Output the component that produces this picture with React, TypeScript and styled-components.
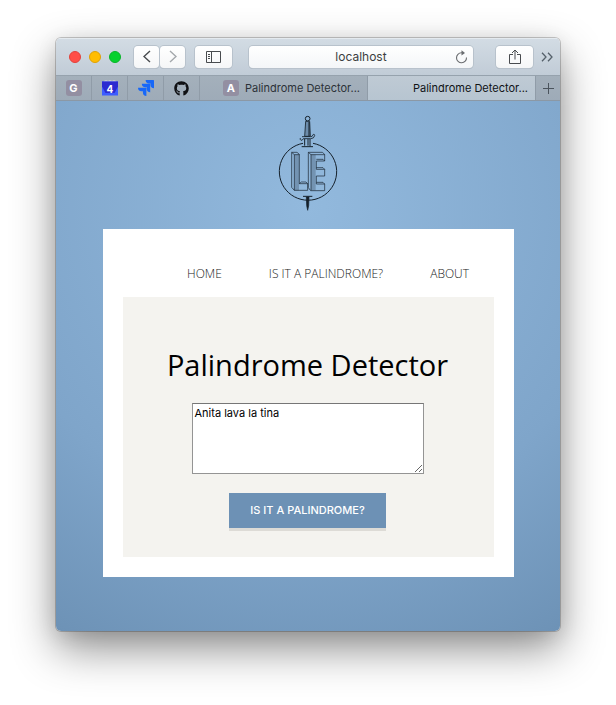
import React, { useState } from 'react';
import styled, { createGlobalStyle } from 'styled-components';
import { SiJira } from 'react-icons/si';
import { FaGithub } from 'react-icons/fa';

const uiFont = '"Inter", "Liberation Sans", sans-serif';
const pageFont = '"Open Sans", "Noto Sans", sans-serif';

const GlobalStyle = createGlobalStyle`
  *, *::before, *::after { box-sizing: border-box; }
  html, body, #root { height: 100%; }
  body { margin: 0; background: #fff; font-family: ${uiFont}; }
  button { font: inherit; border: 0; margin: 0; padding: 0; cursor: pointer; }
`;

const Desktop = styled.div`
  display: flex;
  min-height: 100%;
  padding: 38px 56px 74px;
`;

const Window = styled.div`
  flex: 1;
  min-width: 0;
  display: flex;
  flex-direction: column;
  border-radius: 5px;
  overflow: hidden;
  box-shadow: 0 0 0 1px rgba(0, 0, 0, 0.2), 0 18px 44px rgba(0, 0, 0, 0.44), 0 4px 20px rgba(0, 0, 0, 0.1);
`;

const Toolbar = styled.header`
  display: flex;
  align-items: center;
  height: 37px;
  padding: 0 6px 0 13px;
  background: linear-gradient(#d3dce4, #c1ccd7);
  box-shadow: inset 0 1px #e4eaef;
`;

const Lights = styled.div`
  display: flex;
  gap: 8px;
  margin-right: 13px;
`;

const Light = styled.button<{ $fill: string; $edge: string }>`
  width: 12px;
  height: 12px;
  border-radius: 50%;
  background: ${p => p.$fill};
  border: 1px solid ${p => p.$edge};
`;

const ToolGroup = styled.div`
  display: flex;
  gap: 1px;
  margin-right: 10px;
`;

const ToolButton = styled.button<{ $width: number; $muted?: boolean }>`
  flex: none;
  display: flex;
  align-items: center;
  justify-content: center;
  width: ${p => p.$width}px;
  height: 22px;
  border-radius: 4px;
  color: ${p => (p.$muted ? '#a4a8ac' : '#484b4e')};
  background: linear-gradient(#fff, #f5f6f7);
  box-shadow: 0 0 0 1px #b8c2cc, 0 1px #a9b3bc;
`;

const AddressBar = styled.div`
  flex: 1;
  min-width: 0;
  display: flex;
  align-items: center;
  height: 22px;
  margin: 0 23px 0 17px;
  padding: 0 5px 0 18px;
  border-radius: 4px;
  background: linear-gradient(#fff, #f4f6f8);
  box-shadow: 0 0 0 1px #b8c2cc, 0 1px #a9b3bc;
`;

const AddressInput = styled.input`
  flex: 1;
  min-width: 0;
  padding: 0;
  border: 0;
  outline: 0;
  background: none;
  color: #3c3e40;
  text-align: center;
  font: 12px/20px ${uiFont};
`;

const IconButton = styled.button<{ $gap?: number }>`
  flex: none;
  display: flex;
  margin-left: ${p => p.$gap ?? 0}px;
  color: #56616b;
  background: none;
`;

const TabBar = styled.nav`
  display: flex;
  height: 26px;
  background: linear-gradient(#a4b0bb, #9eabb8);
  border-top: 1px solid #96a2ad;
  border-bottom: 1px solid #8b98a5;
`;

const PinnedTab = styled.button`
  display: flex;
  align-items: center;
  justify-content: center;
  width: 36px;
  border-right: 1px solid #909ca8;
  background: none;
  color: #101114;
`;

const Tab = styled.button<{ $active?: boolean }>`
  flex: 1;
  min-width: 0;
  display: flex;
  align-items: center;
  justify-content: flex-end;
  gap: 6px;
  padding-right: 7px;
  border-right: 1px solid #909ca8;
  color: ${p => (p.$active ? '#101316' : '#2c3238')};
  background: ${p => (p.$active ? 'linear-gradient(#bfcad4, #b7c5d1)' : 'none')};
  font-size: 11px;
  font-weight: 400;
  white-space: nowrap;
`;

const NewTab = styled.button`
  display: flex;
  align-items: center;
  justify-content: center;
  width: 24px;
  color: #4b545d;
  background: none;
`;

const LetterBadge = styled.span`
  width: 16px;
  height: 16px;
  border-radius: 3px;
  background: #938fa2;
  color: #fff;
  text-align: center;
  font: 700 11px/16px ${uiFont};
`;

const Page = styled.main`
  flex: 1;
  padding: 14px 46px 54px 47px;
  background: radial-gradient(circle at 50% 20%, #92b9dd 0%, #7fa5ca 65%, #6d92b6 100%);
  font-family: ${pageFont};
`;

const LogoLink = styled.a`
  display: flex;
  justify-content: center;
  padding-right: 2px;
  margin-bottom: 18px;
`;

const Card = styled.div`
  padding: 20px;
  background: #fff;
`;

const SiteNav = styled.nav`
  display: flex;
  justify-content: flex-end;
  gap: 47px;
  padding: 16px 25px 15px 0;
`;

const NavLink = styled.a`
  color: #222;
  text-decoration: none;
  font-size: 12px;
  font-weight: 300;
  line-height: 17px;
`;

const Panel = styled.section`
  display: flex;
  flex-direction: column;
  align-items: center;
  padding: 48px 22px 29px 20px;
  background: #f4f3ef;
`;

const Title = styled.h1`
  margin: 0 0 18px;
  color: #000;
  font-size: 29px;
  font-weight: 400;
  line-height: 40px;
`;

const Phrase = styled.textarea`
  display: block;
  width: 232px;
  height: 71px;
  padding: 2px;
  border: 1px solid #949494;
  border-top-color: #767676;
  border-radius: 0;
  outline: 0;
  background: #fff;
  color: #000;
  font: 11px/15px ${uiFont};
`;

const Submit = styled.button`
  && {
    margin: 19px 0 0;
    padding: 0 21px;
    height: 35px;
    color: #fff;
    background: #6d91b5;
    box-shadow: 0 3px #dddbd6;
    font: 500 11px/35px ${uiFont};
  }
`;

const ChevronIcon = ({ flip }: { flip?: boolean }) => (
  <svg width="8" height="13" viewBox="0 0 8 13" fill="none" stroke="currentColor" strokeWidth="1.4">
    <path d={flip ? 'M1 1l6 5.5L1 12' : 'M7 1L1 6.5 7 12'} />
  </svg>
);

const SidebarIcon = () => (
  <svg width="15" height="12" viewBox="0 0 15 12" fill="none" stroke="currentColor">
    <path d="M.5.5h14v11H.5zM5.500.5v11M2 3.500h2M2 5.500h2M2 7.500h2" />
  </svg>
);

const ReloadIcon = () => (
  <svg width="13" height="14" viewBox="0 0 13 14" fill="none" stroke="#6a6d70" strokeWidth="1.1">
    <path d="M11.500 7.500A5 5 0 1 1 6.500 2.800H8" />
    <path d="M6.500.3v5.200L10 2.900z" fill="#6a6d70" stroke="none" />
  </svg>
);

const ShareIcon = () => (
  <svg width="12" height="16" viewBox="0 0 12 16" fill="none" stroke="currentColor">
    <path d="M4 5.500H.5v9h11v-9H8M6 10.500V1M3 4l3-3 3 3" />
  </svg>
);

const MoreIcon = () => (
  <svg width="13" height="10" viewBox="0 0 13 10" fill="none" stroke="currentColor" strokeWidth="1.3">
    <path d="M1 .7L5 5 1 9.300M7 .7L11 5 7 9.300" />
  </svg>
);

const PlusIcon = () => (
  <svg width="11" height="11" viewBox="0 0 11 11" stroke="currentColor">
    <path d="M5.500 0v11M0 5.500h11" />
  </svg>
);

const MailCountIcon = () => (
  <svg width="16" height="16" viewBox="0 0 16 16">
    <path d="M2 3V1q2-1.500 4 0 2-1.500 4 0 2-1.500 4 0v2z" fill="#d4d5dc" />
    <path d="M0 1.500h16v14H0z" fill="#3d5cff" />
    <path d="M0 1.500h16v5L12.500 13h-9L0 6.500z" fill="#2c2bd0" />
    <text x="8" y="13" textAnchor="middle" fill="#fff" fontFamily="Inter, sans-serif" fontSize="10" fontWeight="700">4</text>
  </svg>
);

const Logo = () => (
  <svg width="60" height="96" viewBox="39 30 180 288" fill="none" stroke="#15202a" strokeWidth="3">
    <path d="M114 115a86 86 0 1 0 30 0" />
    {/* hilt */}
    <circle cx="128" cy="41" r="7" />
    <path d="M122 49h12l2 45h-17z" fill="#6c8cab" strokeWidth="2.500" />
    <path d="M132 51v42" />
    <path d="M111 95h26q5 1 8-7 4-1 4 4-2 9-12 9h-22q-2 5-7 5-4-3-2-7" strokeWidth="2.500" />
    <path d="M119 102v20M135 102v22M129 102v20" />
    <path d="M110 125h34" />
    {/* left block */}
    <g strokeWidth="2">
      <rect x="88" y="149" width="14" height="107" fill="#7393b2" stroke="none" />
      <path d="M80 142h16l7 6v88h25v20H88l-8-9zM80 142l8 7h15M88 149v107M103 236l6-5h14l5 5" />
    </g>
    {/* right block */}
    <g strokeWidth="2">
      <rect x="138" y="149" width="14" height="107" fill="#7393b2" stroke="none" />
      <path d="M130 142h42l7 6v20h-25v25h25v20h-25v24h25v20h-42l-7-9zM130 142l8 7h41M138 149v107M154 163h20l5 5M154 188h20l5 5M154 232h20l5 5" />
    </g>
    {/* blade tip */}
    <path d="M114 274h28" />
    <path d="M124 276h8l-1 26-3 14-3-14z" fill="#15202a" strokeWidth="2" />
  </svg>
);

export default function App() {
  const [phrase, setPhrase] = useState('Anita lava la tina');
  const [address, setAddress] = useState('localhost');
  return (
    <>
      <GlobalStyle />
      <Desktop>
        <Window>
          <Toolbar>
            <Lights>
              <Light $fill="#ff4f48" $edge="#e2423c" aria-label="Close window" />
              <Light $fill="#ffbd03" $edge="#e0a106" aria-label="Minimize window" />
              <Light $fill="#06d12e" $edge="#08b428" aria-label="Zoom window" />
            </Lights>
            <ToolGroup>
              <ToolButton $width={25} aria-label="Back"><ChevronIcon /></ToolButton>
              <ToolButton $width={25} $muted aria-label="Forward"><ChevronIcon flip /></ToolButton>
            </ToolGroup>
            <ToolButton $width={37} aria-label="Sidebar"><SidebarIcon /></ToolButton>
            <AddressBar>
              <AddressInput aria-label="Address" value={address} onChange={e => setAddress(e.target.value)} />
              <IconButton aria-label="Reload"><ReloadIcon /></IconButton>
            </AddressBar>
            <ToolButton $width={37} aria-label="Share"><ShareIcon /></ToolButton>
            <IconButton $gap={8} aria-label="More"><MoreIcon /></IconButton>
          </Toolbar>
          <TabBar aria-label="Tabs">
            <PinnedTab><LetterBadge>G</LetterBadge></PinnedTab>
            <PinnedTab aria-label="Mail"><MailCountIcon /></PinnedTab>
            <PinnedTab aria-label="Jira"><SiJira size={16} color="#1868f8" /></PinnedTab>
            <PinnedTab aria-label="GitHub"><FaGithub size={15} /></PinnedTab>
            <Tab><LetterBadge>A</LetterBadge>Palindrome Detector...</Tab>
            <Tab $active>Palindrome Detector...</Tab>
            <NewTab aria-label="New tab"><PlusIcon /></NewTab>
          </TabBar>
          <Page>
            <LogoLink href="#" aria-label="Home page"><Logo /></LogoLink>
            <Card>
              <SiteNav aria-label="Site">
                <NavLink href="#">HOME</NavLink>
                <NavLink href="#">IS IT A PALINDROME?</NavLink>
                <NavLink href="#">ABOUT</NavLink>
              </SiteNav>
              <Panel>
                <Title id="title">Palindrome Detector</Title>
                <Phrase aria-labelledby="title" value={phrase} onChange={e => setPhrase(e.target.value)} />
                <Submit type="button">IS IT A PALINDROME?</Submit>
              </Panel>
            </Card>
          </Page>
        </Window>
      </Desktop>
    </>
  );
}
